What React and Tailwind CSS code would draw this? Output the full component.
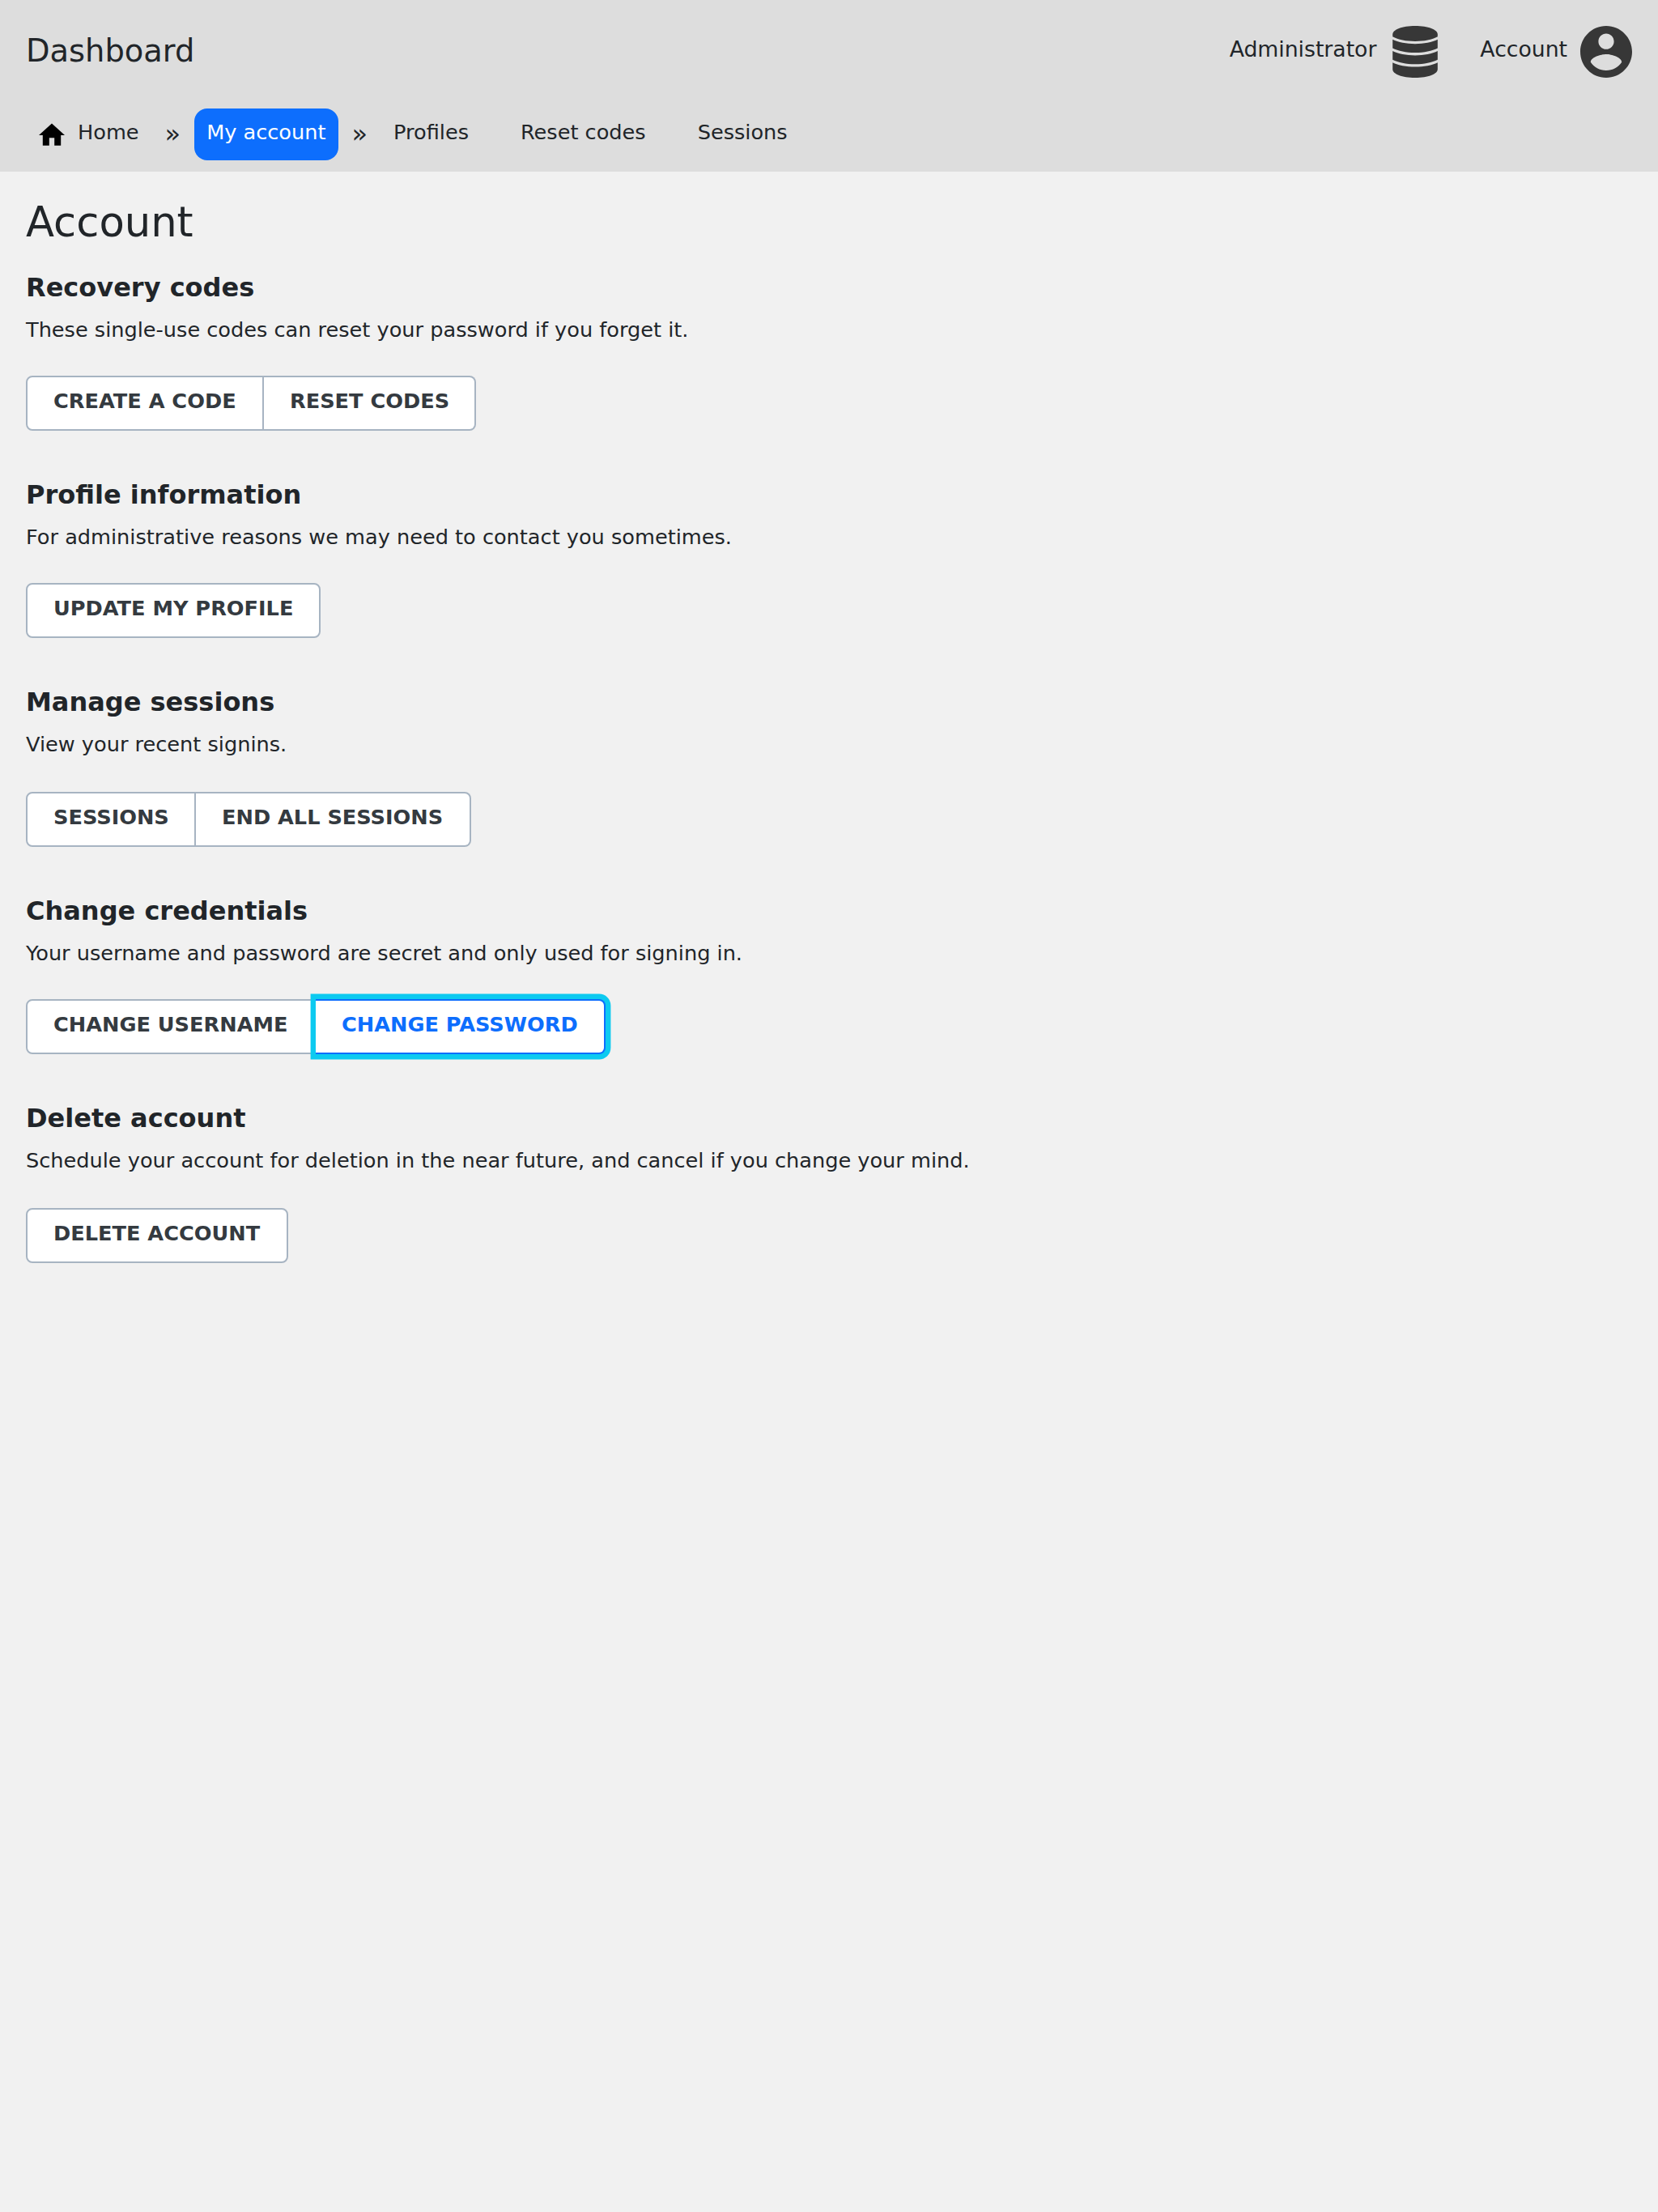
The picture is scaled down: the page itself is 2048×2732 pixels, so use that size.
const SECTIONS = [
  {
    title: "Recovery codes",
    text: "These single-use codes can reset your password if you forget it.",
    actions: [
      { label: "Create a code", width: "w-[294px]" },
      { label: "Reset codes", width: "w-[262px]" },
    ],
  },
  {
    title: "Profile information",
    text: "For administrative reasons we may need to contact you sometimes.",
    actions: [{ label: "Update my profile", width: "w-[364px]" }],
  },
  {
    title: "Manage sessions",
    text: "View your recent signins.",
    actions: [
      { label: "Sessions", width: "w-[210px]" },
      { label: "End all sessions", width: "w-[340px]" },
    ],
    roomy: true,
  },
  {
    title: "Change credentials",
    text: "Your username and password are secret and only used for signing in.",
    actions: [
      { label: "Change username", width: "w-[358px]" },
      { label: "Change password", width: "w-[358px]", focused: true },
    ],
  },
  {
    title: "Delete account",
    text: "Schedule your account for deletion in the near future, and cancel if you change your mind.",
    actions: [{ label: "Delete account", width: "w-[324px]" }],
    roomy: true,
  },
];

function DatabaseIcon() {
  return (
    <svg className="size-16" viewBox="0 0 64 64" fill="#373737">
      <path d="M4.200 10.500C4.200 4.500 16 0 32 0S59.800 4.500 59.800 10.500V13.300C53 17 43 19 32 19S11 17 4.200 13.300z" />
      <path d="M4.200 16.800C11 20.200 21 22.200 32 22.200S53 20.200 59.800 16.800V27.500C53 31 43 33 32 33S11 31 4.200 27.500z" />
      <path d="M4.200 31C11 34.400 21 36.400 32 36.400S53 34.400 59.800 31V41.700C53 45.200 43 47.200 32 47.200S11 45.200 4.200 41.700z" />
      <path d="M4.200 45.200C11 48.600 21 50.600 32 50.600S53 48.600 59.800 45.200V53.500C59.800 59.500 48 64 32 64S4.200 59.500 4.200 53.500z" />
    </svg>
  );
}

function AccountIcon() {
  return (
    <svg className="size-16" viewBox="2 2 20 20" fill="#373737">
      <path d="M12 2C6.48 2 2 6.48 2 12s4.48 10 10 10 10-4.48 10-10S17.52 2 12 2zm0 3c1.66 0 3 1.34 3 3s-1.34 3-3 3-3-1.340-3-3 1.340-3 3-3zm0 14.200c-2.500 0-4.710-1.280-6-3.220.030-1.990 4-3.080 6-3.080 1.990 0 5.970 1.090 6 3.080-1.290 1.940-3.500 3.220-6 3.220z" />
    </svg>
  );
}

function HomeIcon() {
  return (
    <svg className="mt-[17px] size-8" viewBox="2 2 20 20" fill="#000">
      <path d="M10 20v-6h4v6h5v-8h3L12 3 2 12h3v8z" />
    </svg>
  );
}

function Separator() {
  return <span className="px-4 text-[32px] leading-[62px]">»</span>;
}

function NavItem({ children, active }) {
  return (
    <a
      className={
        active
          ? "ml-[0.8px] flex h-16 gap-4 rounded-2xl bg-[#0d6efd] pl-[15.2px] pr-4 leading-[58px] text-white"
          : "flex h-16 gap-4 px-4 leading-[58px]"
      }
    >
      {children}
    </a>
  );
}

function ActionButton({ label, width, focused }) {
  return (
    <button
      className={`h-[68px] whitespace-nowrap border-2 border-l-0 bg-white pb-1.5 pl-8 text-left font-bold uppercase first:rounded-l-lg first:border-l-2 last:rounded-r-lg ${width} ${
        focused
          ? "relative z-10 border-[#0d6efd] text-[#0d6efd] outline-none ring-[6.4px] ring-[#0dcaf0]"
          : "border-[#a7b4c2] text-[#343a40]"
      }`}
    >
      {label}
    </button>
  );
}

export default function App() {
  return (
    <div className="min-h-[2732px] w-[2048px] bg-[#f1f1f1] font-['DejaVu_Sans',sans-serif] text-[25.6px] text-[#212529]">
      <header className="h-[212px] bg-[#ddd] px-8">
        <div className="flex h-[134px] items-start justify-between pt-8">
          <div className="text-[38.4px] leading-[61px]">Dashboard</div>
          <div className="flex gap-12 text-[26.67px] leading-[57px]">
            <div className="flex gap-4">
              Administrator
              <DatabaseIcon />
            </div>
            <div className="flex gap-4">
              Account
              <AccountIcon />
            </div>
          </div>
        </div>
        <nav className="flex">
          <NavItem>
            <HomeIcon />
            Home
          </NavItem>
          <Separator />
          <NavItem active>My account</NavItem>
          <Separator />
          <div className="flex gap-8">
            <NavItem>Profiles</NavItem>
            <NavItem>Reset codes</NavItem>
            <NavItem>Sessions</NavItem>
          </div>
        </nav>
      </header>
      <main className="px-8 pt-8">
        <h1 className="text-[51.2px] leading-[60px]">Account</h1>
        <div className="mt-8 flex flex-col gap-[60px]">
          {SECTIONS.map((s) => (
            <section key={s.title}>
              <h2 className="text-[32px] font-bold leading-[38px]">{s.title}</h2>
              <p className="mt-3.5 leading-[38px]">{s.text}</p>
              <div className={s.roomy ? "mt-10 flex" : "mt-[38px] flex"}>
                {s.actions.map((a) => (
                  <ActionButton key={a.label} {...a} />
                ))}
              </div>
            </section>
          ))}
        </div>
      </main>
    </div>
  );
}
